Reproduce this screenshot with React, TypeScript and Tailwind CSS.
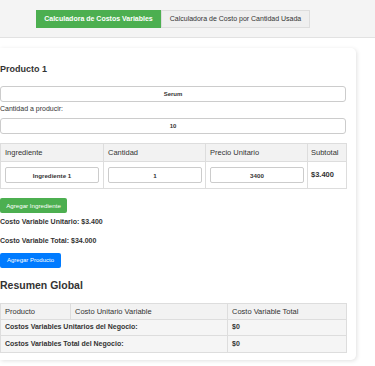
import { useState } from 'react';

export default function App() {
  const [tab, setTab] = useState('variables');

  return (
    <div className="min-h-[366px] bg-white font-['Liberation_Sans',Arial,sans-serif] text-[#333]">
      {/* Tabs header */}
      <div className="h-[38px] bg-[#f4f4f4] border-b border-[#e2e2e2] pt-[10px] pl-[36px] flex">
        <button
          onClick={() => setTab('variables')}
          className={`h-[18px] w-[125px] text-[7px] font-bold ${tab === 'variables' ? 'bg-[#4caf50] text-white' : 'bg-[#eee] text-[#333]'}`}
        >
          Calculadora de Costos Variables
        </button>
        <button
          onClick={() => setTab('cantidad')}
          className={`h-[18px] w-[149px] text-[7px] border border-[#ddd] ${tab === 'cantidad' ? 'bg-[#4caf50] text-white' : 'bg-[#efefef] text-[#333]'}`}
        >
          Calculadora de Costo por Cantidad Usada
        </button>
      </div>

      {/* Card */}
      <div className="mt-[10px] w-[356px] bg-white rounded-r-[5px] shadow-[1px_1px_4px_rgba(0,0,0,0.12)] pt-[15px] pb-[7px] pr-[10px]">
        <h3 className="text-[9px] leading-[12px] font-bold">Producto 1</h3>

        <input
          defaultValue="Serum"
          className="mt-[11px] block w-[346px] h-[16px] border border-[#ccc] rounded-[3px] text-center text-[6px] font-bold outline-none"
        />
        <label className="block mt-[2px] text-[7px] leading-[10px] text-[#333]">Cantidad a producir:</label>
        <input
          defaultValue="10"
          className="mt-[4px] block w-[346px] h-[16px] border border-[#ccc] rounded-[3px] text-center text-[6px] font-bold outline-none"
        />

        <table className="mt-[9px] w-[346px] table-fixed border-collapse text-[7.5px]">
          <colgroup>
            <col className="w-[103px]" />
            <col className="w-[102px]" />
            <col className="w-[102px]" />
            <col className="w-[39px]" />
          </colgroup>
          <thead>
            <tr className="h-[18px] bg-[#f2f2f2]">
              <th className="border border-[#ddd] px-[4px] text-left font-normal">Ingrediente</th>
              <th className="border border-[#ddd] px-[4px] text-left font-normal">Cantidad</th>
              <th className="border border-[#ddd] px-[4px] text-left font-normal">Precio Unitario</th>
              <th className="border border-[#ddd] px-[3px] text-left font-normal">Subtotal</th>
            </tr>
          </thead>
          <tbody>
            <tr className="h-[27px]">
              <td className="border border-[#ddd] px-[4px]">
                <input defaultValue="Ingrediente 1" className="block w-[94px] h-[16px] border border-[#ccc] rounded-[2px] text-center text-[6.2px] font-bold outline-none" />
              </td>
              <td className="border border-[#ddd] px-[4px]">
                <input defaultValue="1" className="block w-[94px] h-[16px] border border-[#ccc] rounded-[2px] text-center text-[6.2px] font-bold outline-none" />
              </td>
              <td className="border border-[#ddd] px-[4px]">
                <input defaultValue="3400" className="block w-[94px] h-[16px] border border-[#ccc] rounded-[2px] text-center text-[6.2px] font-bold outline-none" />
              </td>
              <td className="border border-[#ddd] px-[3px] font-bold text-[7.5px]">$3.400</td>
            </tr>
          </tbody>
        </table>

        <button className="mt-[9px] block h-[15px] w-[67px] bg-[#4caf50] text-white text-[6.2px] rounded-[2px]">
          Agregar Ingrediente
        </button>
        <p className="mt-[4px] text-[7px] leading-[10px] font-bold">Costo Variable Unitario: $3.400</p>
        <p className="mt-[9px] text-[7px] leading-[10px] font-bold">Costo Variable Total: $34.000</p>
        <button className="mt-[7px] block h-[15px] w-[61px] bg-[#007bff] text-white text-[6px] rounded-[2px]">
          Agregar Producto
        </button>

        <h2 className="mt-[9px] text-[10.5px] leading-[16px] font-bold">Resumen Global</h2>

        <table className="mt-[10px] w-[346px] table-fixed border-collapse text-[7.5px]">
          <colgroup>
            <col className="w-[70px]" />
            <col className="w-[157px]" />
            <col className="w-[119px]" />
          </colgroup>
          <thead>
            <tr className="h-[16px] bg-[#f2f2f2]">
              <th className="border border-[#ddd] px-[4px] text-left font-normal">Producto</th>
              <th className="border border-[#ddd] px-[4px] text-left font-normal">Costo Unitario Variable</th>
              <th className="border border-[#ddd] px-[4px] text-left font-normal">Costo Variable Total</th>
            </tr>
          </thead>
          <tbody className="font-bold text-[7px]">
            <tr className="h-[16px] bg-[#f5f5f5]">
              <td colSpan={2} className="border border-[#ddd] px-[4px]">Costos Variables Unitarios del Negocio:</td>
              <td className="border border-[#ddd] px-[4px]">$0</td>
            </tr>
            <tr className="h-[17px] bg-[#f5f5f5]">
              <td colSpan={2} className="border border-[#ddd] px-[4px]">Costos Variables Total del Negocio:</td>
              <td className="border border-[#ddd] px-[4px]">$0</td>
            </tr>
          </tbody>
        </table>
      </div>
    </div>
  );
}
